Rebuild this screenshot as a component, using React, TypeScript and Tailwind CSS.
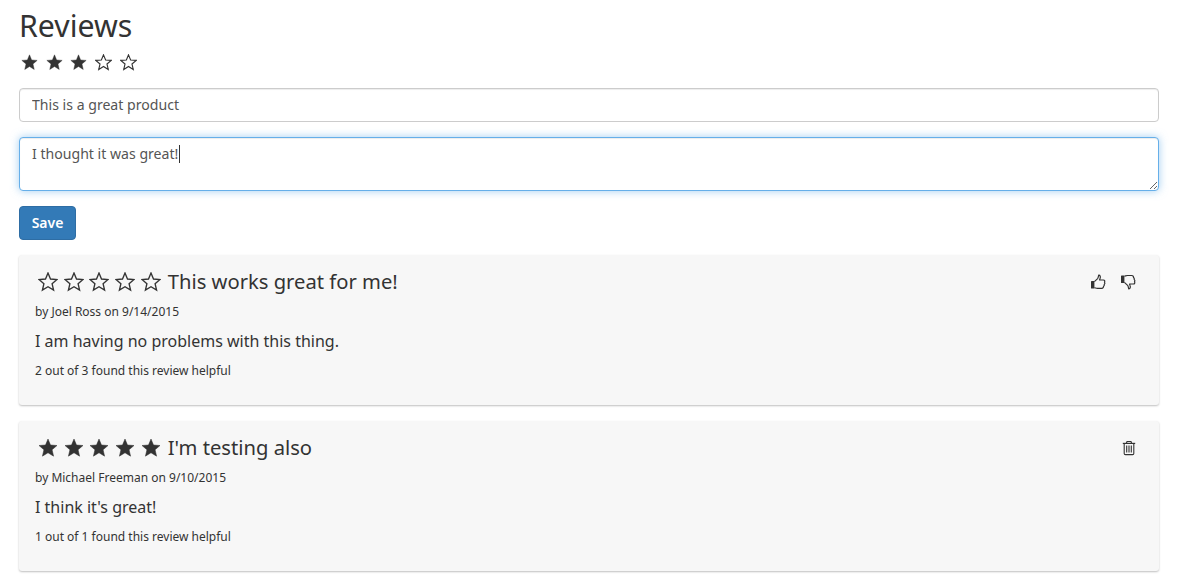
import React from "react";

const starPts = "12,1.2 15,8.4 22.8,9 16.9,14.1 18.7,21.8 12,17.7 5.3,21.8 7.1,14.1 1.2,9 9,8.4";

function Star({ filled, size }: { filled: boolean; size: number }) {
  return (
    <svg width={size} height={size} viewBox="0 0 24 24" className="block shrink-0">
      <polygon
        points={starPts}
        fill={filled ? "#333" : "none"}
        stroke="#333"
        strokeWidth={filled ? 0.6 : 1.6}
        strokeLinejoin="miter"
      />
    </svg>
  );
}

function Stars({ n, size, gap }: { n: number; size: number; gap: string }) {
  return (
    <div className={`flex items-center ${gap}`}>
      {[0, 1, 2, 3, 4].map((i) => (
        <Star key={i} filled={i < n} size={size} />
      ))}
    </div>
  );
}

function ThumbUp() {
  return (
    <svg width="16" height="16" viewBox="0 0 16 16" className="block">
      <rect x="1" y="7" width="3.4" height="7.5" rx="0.6" fill="#333" />
      <path
        d="M4.4 7.6 L7.6 4.6 C8.3 3.8 8.4 2.6 8.7 1.2 C10.2 1 10.7 3 10 4.6 L9.5 6 L13.4 6 C14.8 6 15 7.4 14.5 8.2 C15 9 14.8 9.9 14.2 10.4 C14.4 11.2 14.1 12 13.5 12.3 C13.6 13.3 13 14.4 11.8 14.4 L7.4 14.4 C6.2 14.4 5.4 13.8 4.4 13.6"
        fill="none"
        stroke="#333"
        strokeWidth="1.2"
        strokeLinejoin="round"
      />
    </svg>
  );
}

function ThumbDown() {
  return (
    <svg width="16" height="16" viewBox="0 0 16 16" className="block">
      <rect x="1" y="1.5" width="3.4" height="7.5" rx="0.6" fill="#333" />
      <path
        d="M4.4 2.2 C5.4 2 6.2 1.5 7.4 1.5 L11.8 1.5 C13 1.5 13.6 2.6 13.5 3.6 C14.1 4 14.4 4.8 14.2 5.6 C14.8 6.1 15 7 14.5 7.8 C15 8.6 14.8 10 13.4 10 L9.5 10 L10 11.4 C10.7 13 10.2 15 8.7 14.8 C8.4 13.4 8.3 12.2 7.6 11.4 L4.4 8.4"
        fill="none"
        stroke="#333"
        strokeWidth="1.2"
        strokeLinejoin="round"
      />
    </svg>
  );
}

function Trash() {
  return (
    <svg width="14" height="16" viewBox="0 0 14 16" className="block">
      <path d="M0.8 3.4 H13.2" stroke="#333" strokeWidth="1.2" />
      <path d="M4.4 3.2 L5 1.5 H9 L9.6 3.2" fill="none" stroke="#333" strokeWidth="1.1" />
      <path d="M2.2 3.6 V13.4 C2.2 14.2 2.7 14.6 3.4 14.6 H10.6 C11.3 14.6 11.8 14.2 11.8 13.4 V3.6" fill="none" stroke="#333" strokeWidth="1.1" />
      <path d="M4.7 5.5 V12.6 M7 5.5 V12.6 M9.3 5.5 V12.6" stroke="#333" strokeWidth="1.1" />
    </svg>
  );
}

function Review({
  stars,
  title,
  by,
  body,
  helpful,
  actions,
}: {
  stars: number;
  title: string;
  by: string;
  body: string;
  helpful: string;
  actions: React.ReactNode;
}) {
  return (
    <div className="h-[150px] rounded-[3px] bg-[#f7f7f7] pl-[16px] pr-[23px] pt-[12px] shadow-[0_1px_2px_rgba(0,0,0,0.25)]">
      <div className="flex items-start justify-between">
        <div className="flex h-[30px] items-center pl-[3px]">
          <Stars n={stars} size={20} gap="gap-[5.7px]" />
          <h3 className="ml-[7px] pb-[2px] text-[20.2px] leading-[30px] text-[#333]">{title}</h3>
        </div>
        <div className="flex h-[30px] items-center gap-[14px]">{actions}</div>
      </div>
      <p className="mt-[6px] text-[12px] leading-[17px] text-[#333]">{by}</p>
      <p className="mt-[9px] text-[16px] leading-[24px] text-[#333]">{body}</p>
      <p className="mt-[9px] text-[12px] leading-[17px] text-[#333]">{helpful}</p>
    </div>
  );
}

export default function App() {
  return (
    <div
      className="min-h-[579px] bg-white pl-[19px] pr-[20px] text-[#333]"
      style={{ fontFamily: '"Noto Sans", "Open Sans", sans-serif' }}
    >
      <h2 className="pt-[6px] text-[30.3px] font-normal leading-[40px]">Reviews</h2>
      <div className="mt-[8px] pl-[2px]">
        <Stars n={3} size={17} gap="gap-[7.7px]" />
      </div>
      <input
        readOnly
        value="This is a great product"
        className="mt-[17px] block h-[34px] w-full rounded-[4px] border border-[#ccc] bg-white px-[12px] pb-[2px] text-[14.1px] text-[#555] shadow-[inset_0_1px_1px_rgba(0,0,0,0.075)] outline-none"
      />
      <div className="relative mt-[15px]">
        <textarea
          readOnly
          value="I thought it was great!"
          className="block h-[54px] w-full rounded-[4px] border border-[#66afe9] bg-white px-[12px] py-[6px] text-[14.1px] leading-[20px] text-[#555] shadow-[inset_0_1px_1px_rgba(0,0,0,0.075),0_0_8px_rgba(102,175,233,0.6)] outline-none"
        />
        <span className="absolute left-[160px] top-[8px] h-[18px] w-px bg-[#333]" />
      </div>
      <button className="mt-[15px] block h-[34px] w-[57px] rounded-[4px] border border-[#2e6da4] bg-[#337ab7] pb-[2px] text-[14px] font-semibold text-white">
        Save
      </button>
      <div className="mt-[15px] flex flex-col gap-[16px]">
        <Review
          stars={0}
          title="This works great for me!"
          by="by Joel Ross on 9/14/2015"
          body="I am having no problems with this thing."
          helpful="2 out of 3 found this review helpful"
          actions={
            <>
              <ThumbUp />
              <ThumbDown />
            </>
          }
        />
        <Review
          stars={5}
          title="I'm testing also"
          by="by Michael Freeman on 9/10/2015"
          body="I think it's great!"
          helpful="1 out of 1 found this review helpful"
          actions={<Trash />}
        />
      </div>
    </div>
  );
}
